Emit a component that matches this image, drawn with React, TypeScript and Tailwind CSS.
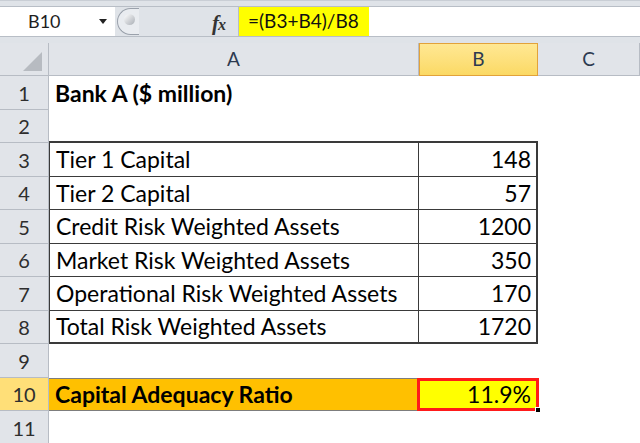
import React from 'react';

const rowHeights = [34, 33, 34, 33, 34, 33, 34, 33, 34, 33, 34];

type Row = { a?: string; b?: string; kind?: 'title' | 'table' | 'result' };

const rows: Row[] = [
  { a: 'Bank A ($ million)', kind: 'title' },
  {},
  { a: 'Tier 1 Capital', b: '148', kind: 'table' },
  { a: 'Tier 2 Capital', b: '57', kind: 'table' },
  { a: 'Credit Risk Weighted Assets', b: '1200', kind: 'table' },
  { a: 'Market Risk Weighted Assets', b: '350', kind: 'table' },
  { a: 'Operational Risk Weighted Assets', b: '170', kind: 'table' },
  { a: 'Total Risk Weighted Assets', b: '1720', kind: 'table' },
  {},
  { a: 'Capital Adequacy Ratio', b: '11.9%', kind: 'result' },
  {},
];

function FormulaBar() {
  return (
    <div className="h-[43px] bg-[#dfe3e8] border-t border-[#c9ced5] flex flex-col">
      <div className="h-[5px]" />
      <div className="h-[31px] flex border-y border-[#b8bec6]">
        {/* name box */}
        <div className="w-[115px] bg-white flex items-center relative">
          <span className="pl-[28px] text-[18px] text-[#1e1e1e]">B10</span>
          <svg className="absolute left-[99px] top-[12px]" width="8" height="5" viewBox="0 0 8 5">
            <path d="M0 0 L8 0 L4 5 Z" fill="#222" />
          </svg>
        </div>
        {/* grip + fx */}
        <div className="w-[123px] bg-[#dfe3e8] flex items-center relative">
          <div className="absolute left-[2px] top-[1px] bottom-[1px] w-[22px] rounded-l-full border-l border-y border-[#9aa1ab] bg-[#e9ecf0]" />
          <div className="absolute left-[9px] top-[7px] w-[11px] h-[11px] rounded-full bg-gradient-to-br from-[#ffffff] to-[#a9aeb5]" />
          <span className="absolute left-[97px] top-[1px] font-['Liberation_Serif',serif] italic font-bold text-[21px] text-[#333] tracking-[-1px]">
            f<span className="text-[16px]">x</span>
          </span>
        </div>
        {/* formula */}
        <div className="flex-1 bg-white flex items-center border-l border-[#b8bec6]">
          <span className="h-full w-[130px] bg-[#ffff00] flex items-center pl-[9px] text-[19px] text-[#111]">=(B3+B4)/B8</span>
        </div>
      </div>
      <div className="flex-1" />
    </div>
  );
}

function ColumnHeaders() {
  return (
    <div className="h-[33px] flex bg-[#e1e4e9] border-b border-[#b7bcc4] text-[19px] text-[#2d3a50]">
      <div className="w-[49px] border-r border-[#b7bcc4] relative">
        <svg className="absolute left-[23px] top-[9px]" width="19" height="19" viewBox="0 0 19 19">
          <path d="M19 0 L19 19 L0 19 Z" fill="#b7bbc1" />
        </svg>
      </div>
      <div className="w-[370px] border-r border-[#b7bcc4] flex items-center justify-center">A</div>
      <div className="w-[119px] flex items-center justify-center bg-gradient-to-b from-[#ffe893] to-[#fbd964] border border-[#e2a23a] -mb-px">B</div>
      <div className="flex-1 flex items-center justify-center border-r border-[#b7bcc4]">C</div>
    </div>
  );
}

function SheetRow({ row, index }: { row: Row; index: number }) {
  const n = index + 1;
  const h = rowHeights[index];
  const isResult = row.kind === 'result';
  const isTable = row.kind === 'table';
  const isTop = n === 2;
  const isLast = n === 8;

  let aCls = 'w-[370px] flex items-center pl-[6px] ';
  let bCls = 'w-[119px] flex items-center justify-end pr-[5px] ';
  if (isTable) {
    aCls += 'border-l border-r border-[#3a3a3a] ' + (isLast ? 'border-b-2' : 'border-b');
    bCls += 'border-r-2 border-[#3a3a3a] ' + (isLast ? 'border-b-2' : 'border-b');
  } else if (isTop) {
    aCls += 'border-b-2 border-[#3a3a3a]';
    bCls += 'border-b-2 border-[#3a3a3a]';
  } else if (isResult) {
    aCls += 'bg-[#ffc000] border-y border-[#7d7d7d] font-bold';
    bCls += 'bg-[#ffff00] border-[3px] border-[#ff1a1a] relative -ml-[2px] w-[122px]';
  }
  if (row.kind === 'title') aCls += ' font-bold';

  return (
    <div className="flex" style={{ height: h }}>
      <div
        className={`w-[49px] shrink-0 flex items-center justify-center border-r border-b border-[#b7bcc4] text-[20px] text-[#2e2e2e] ${
          isResult ? 'bg-[#ffdf78]' : 'bg-[#e1e4e9]'
        }`}
      >
        {n}
      </div>
      <div className={aCls}>{row.a}</div>
      <div className={bCls}>
        {row.b}
        {isResult && <div className="absolute -right-[5px] -bottom-[5px] w-[6px] h-[6px] bg-black border border-white" />}
      </div>
      <div className="flex-1" />
    </div>
  );
}

export default function App() {
  return (
    <div className="w-[640px] h-[443px] overflow-hidden bg-white font-[Lato,'Liberation_Sans',sans-serif] text-[23px] text-black">
      <FormulaBar />
      <ColumnHeaders />
      {rows.map((r, i) => (
        <SheetRow key={i} row={r} index={i} />
      ))}
    </div>
  );
}
